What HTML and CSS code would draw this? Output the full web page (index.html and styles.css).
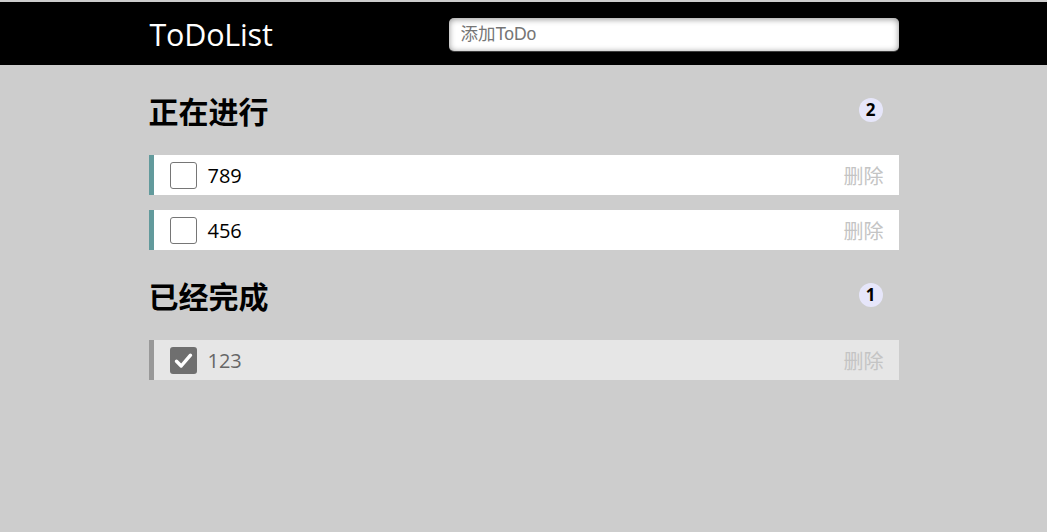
FILE: index.html
```html
<!DOCTYPE html>
<html lang="zh">
<head>
<meta charset="utf-8">
<title>ToDoList</title>
<link rel="stylesheet" href="styles.css">
</head>
<body>
<header class="header">
  <div class="wrap header-inner">
    <label class="logo">ToDoList</label>
    <input class="add-input" type="text" placeholder="添加ToDo">
  </div>
</header>
<main class="wrap main">
  <h2 class="group-title">正在进行<span class="count">2</span></h2>
  <ul class="list">
    <li class="item">
      <span class="box"></span>
      <span class="text">789</span>
      <span class="del">删除</span>
    </li>
    <li class="item">
      <span class="box"></span>
      <span class="text">456</span>
      <span class="del">删除</span>
    </li>
  </ul>
  <h2 class="group-title">已经完成<span class="count">1</span></h2>
  <ul class="list">
    <li class="item done">
      <span class="box checked"><svg viewBox="0 0 27 27" width="27" height="27"><path d="M6.5 14.2 L11.2 19 L20.5 8.2" fill="none" stroke="#fff" stroke-width="3.4" stroke-linecap="round" stroke-linejoin="round"/></svg></span>
      <span class="text">123</span>
      <span class="del">删除</span>
    </li>
  </ul>
</main>
</body>
</html>
```

FILE: styles.css
```css
html, body {
  margin: 0;
  padding: 0;
}
body {
  background: #cdcdcd;
  font-family: "Noto Sans", "Noto Sans CJK SC", sans-serif;
  padding-top: 2px;
}
.wrap {
  width: 750px;
  margin: 0 auto;
}
.header {
  background: #000;
  height: 63px;
}
.header-inner {
  display: flex;
  align-items: center;
  justify-content: space-between;
  height: 63px;
}
.logo {
  color: #fff;
  font-family: "Open Sans", "Noto Sans CJK SC", sans-serif;
  font-size: 30.5px;
  padding-left: 1px;
  letter-spacing: -0.2px;
}
.add-input {
  box-sizing: border-box;
  width: 450px;
  height: 33px;
  margin-top: 2px;
  border: none;
  border-radius: 5px;
  background: #fff;
  box-shadow: 0 1px 0 rgba(255,255,255,0.24), 0 1px 6px rgba(0,0,0,0.45) inset;
  padding: 0 12px;
  font-family: "Liberation Sans", "Noto Sans CJK SC", sans-serif;
  font-size: 17.5px;
  outline: none;
}
.add-input::placeholder {
  color: #757575;
}
.main {
  padding-top: 0;
}
.group-title {
  display: flex;
  align-items: center;
  justify-content: space-between;
  margin: 25px 0 25px;
  height: 40px;
  font-size: 30px;
  font-weight: 700;
  color: #000;
  font-family: "Noto Sans CJK SC", sans-serif;
  padding-left: 0;
}
.count {
  display: flex;
  align-items: center;
  justify-content: center;
  width: 24px;
  height: 24px;
  border-radius: 50%;
  background: #e6e6fa;
  font-family: "Open Sans", sans-serif;
  font-size: 17px;
  font-weight: 700;
  margin-right: 16px;
  margin-top: -1px;
}
.list {
  list-style: none;
  margin: 0;
  padding: 0;
}
.item {
  display: flex;
  align-items: center;
  height: 40px;
  margin-bottom: 15px;
  background: #fff;
  border-left: 5px solid #629a9c;
  padding: 0 15px 0 16px;
  box-sizing: border-box;
}
.box {
  box-sizing: border-box;
  width: 27px;
  height: 27px;
  border: 1px solid #767676;
  border-radius: 3px;
  background: #fff;
  flex: none;
}
.box.checked {
  border: none;
  background: #6f6f6f;
  display: flex;
}
.text {
  margin-left: 11px;
  font-size: 20px;
  color: #000;
  font-family: "Open Sans", sans-serif;
  flex: 1;
}
.del {
  font-family: "Noto Sans CJK SC", sans-serif;
  font-size: 20px;
  color: #c4c4c4;
}
.item.done {
  background: #e6e6e6;
  border-left-color: #999;
}
.item.done .text {
  color: #666;
}
```
